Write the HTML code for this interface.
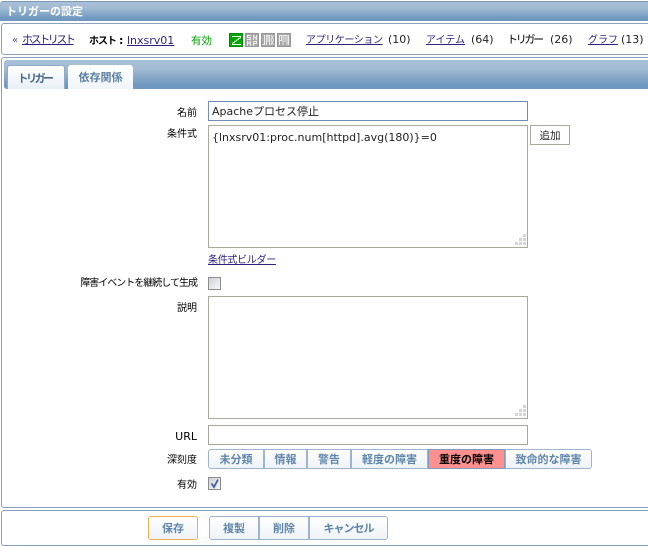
<!DOCTYPE html>
<html lang="ja"><head><meta charset="utf-8"><title>トリガーの設定</title>
<style>
html,body{margin:0;padding:0;background:#fff}
body{width:648px;height:547px;position:relative;overflow:hidden;font:10px "DejaVu Sans","WenQuanYi Zen Hei","Noto Sans CJK JP",sans-serif;color:#000}
.a{position:absolute;white-space:nowrap;line-height:14px}
.n{font-size:11px;color:#222}
a{color:#2f1f7f;text-decoration:underline}
.hb{position:absolute;background:linear-gradient(#a8c0d8,#a2bbd3 30%,#7099c1 85%,#6f98c0)}
.box{position:absolute;left:1px;width:660px;border:1px solid #8aa0bb;border-radius:3px;box-sizing:border-box;background:#fff}
.lab{position:absolute;right:451px;white-space:nowrap;line-height:14px;text-align:right}
.in{position:absolute;box-sizing:border-box;background:#fff;border:1px solid #aaa89a}
.grip{position:absolute;right:0;bottom:0;display:block}
.tab{position:absolute;top:65px;height:24px;box-sizing:border-box;border-radius:3px 3px 0 0;text-align:center;font-weight:bold;font-size:11px;line-height:26px;color:#5b7fa3;background:linear-gradient(#fff,#f0f5f9)}
.btn{position:absolute;box-sizing:border-box;text-align:center;font-weight:bold;font-size:11px;color:#5f86aa;background:linear-gradient(#fff,#eef3f7);border:1px solid #9db3cf;line-height:20px}
.ck{position:absolute;width:13px;height:13px;box-sizing:border-box;border:1px solid #8c8c8c;background:linear-gradient(135deg,#cfd2d8,#f7f7f9)}
.ic{position:absolute;top:33px;width:14px;height:14px;box-sizing:border-box;background:#a8a8a8;border:1px solid #969696}
.ic svg{display:block;shape-rendering:crispEdges}
.ic path{fill:none;stroke:#ececec;stroke-width:1}
</style></head><body>

<div class="hb" style="left:0;top:1px;width:660px;height:20px;border-top:1px solid #7f98b6;border-radius:3px 0 0 0;box-sizing:border-box"></div>
<div class="a" style="left:6px;top:5px;color:#fff;font-weight:bold;font-size:11px">トリガーの設定</div>

<div class="box" style="top:23px;height:32px"></div>
<div class="a" style="left:12px;top:34px;color:#4d4d80;font-size:10px">«</div>
<a class="a" style="left:22px;top:33px;font-size:11px;letter-spacing:-2.400px">ホストリスト</a>
<div class="a" style="left:89px;top:34px;font-weight:bold;letter-spacing:-1px">ホスト<span style="letter-spacing:0;margin-left:3px;font-size:11px">:</span></div>
<a class="a" style="left:127px;top:34px;font-size:11px">lnxsrv01</a>
<div class="a" style="left:191px;top:34px;color:#00a000;font-size:10.500px">有効</div>

<div class="ic" style="left:229px;background:#00a800;border-color:#008f00"><svg width="12" height="12"><path d="M2 2.500H10.500V3.500L2.500 9.500V10.500H11" style="stroke:#fff"/></svg></div>
<div class="ic" style="left:245px"><svg width="12" height="12"><path d="M5 1.500H1.500V3.500H4.500V5.500H1M7.500 6V1.500L10.500 5.500V1M1.500 12V7.500L3 9.500L4.500 7.500V12M7.500 12V7.500H10.500V9.500H7.500"/></svg></div>
<div class="ic" style="left:261px"><svg width="12" height="12"><path d="M2.500 1V10.500H.5M4.500 11V1.500H7.500V11M6 1.500V8M9 1L11.500 6L9 11M11.500 1L9 6L11.500 11"/></svg></div>
<div class="ic" style="left:277px"><svg width="12" height="12"><path d="M1.500 11V1.500H3.500V6.500H1.500M5 11V1.500H9V11M7 1.500V8M10.500 1V11"/></svg></div>

<a class="a" style="left:306px;top:34px;letter-spacing:-.4px">アプリケーション</a><div class="a n" style="left:388px;top:33px">(10)</div>
<a class="a" style="left:426px;top:34px">アイテム</a><div class="a n" style="left:471px;top:33px">(64)</div>
<div class="a" style="left:507px;top:33px;font-size:11px;letter-spacing:-2.300px">トリガー</div><div class="a n" style="left:550px;top:33px">(26)</div>
<a class="a" style="left:588px;top:34px">グラフ</a><div class="a n" style="left:621px;top:33px">(13)</div>

<div class="box" style="top:57px;height:451px"></div>
<div class="hb" style="left:4px;top:60px;width:660px;height:29px;border-radius:3px 0 0 3px"></div>
<div class="tab" style="left:7px;width:58px;color:#4a6a8a;border:1px solid #8fabc8;border-bottom:0;background:linear-gradient(#fff,#e9f0f6);letter-spacing:-2.500px;line-height:25px;padding-right:3px">トリガー</div>
<div class="tab" style="left:68px;width:65px">依存関係</div>

<div class="lab" style="top:107px">名前</div>
<div class="in" style="left:208px;top:101px;width:320px;height:20px;border-color:#6f8fb8;padding-left:3px;line-height:20px;font-size:11px;color:#222">Apacheプロセス停止</div>

<div class="lab" style="top:128px">条件式</div>
<div class="in" style="left:208px;top:125px;width:320px;height:123px;padding:4px 0 0 3px;line-height:15px;font-size:11px;color:#222">{lnxsrv01:proc.num[httpd].avg(180)}=0<svg class="grip" width="14" height="14"><path d="M10 1h3v3h-3zM6 5h3v3H6zM10 5h3v3h-3zM2 9h3v3H2zM6 9h3v3H6zM10 9h3v3h-3z" fill="#d4d4d4"/></svg></div>
<div class="in" style="left:530px;top:125px;width:40px;height:20px;text-align:center;line-height:21px;color:#222;font-size:10.500px">追加</div>
<a class="a" style="left:208px;top:254px;letter-spacing:-.3px">条件式ビルダー</a>

<div class="lab" style="top:277px;letter-spacing:-1px">障害イベントを継続して生成</div>
<div class="ck" style="left:208px;top:277px"></div>

<div class="lab" style="top:302px">説明</div>
<div class="in" style="left:208px;top:296px;width:320px;height:123px"><svg class="grip" width="14" height="14"><path d="M10 1h3v3h-3zM6 5h3v3H6zM10 5h3v3h-3zM2 9h3v3H2zM6 9h3v3H6zM10 9h3v3h-3z" fill="#d4d4d4"/></svg></div>

<div class="lab" style="top:430px;font-size:11px">URL</div>
<div class="in" style="left:208px;top:425px;width:320px;height:20px"></div>

<div class="lab" style="top:454px">深刻度</div>
<div class="btn" style="left:208px;top:449px;width:56px;height:20px;border-radius:3px 0 0 3px">未分類</div>
<div class="btn" style="left:264px;top:449px;width:43px;height:20px">情報</div>
<div class="btn" style="left:307px;top:449px;width:44px;height:20px">警告</div>
<div class="btn" style="left:351px;top:449px;width:77px;height:20px">軽度の障害</div>
<div class="btn" style="left:428px;top:449px;width:77px;height:20px;background:#ff9090;color:#000;border-color:#7f9cc0">重度の障害</div>
<div class="btn" style="left:505px;top:449px;width:87px;height:20px;border-radius:0 3px 3px 0">致命的な障害</div>

<div class="lab" style="top:479px">有効</div>
<div class="ck" style="left:208px;top:477px"><svg width="11" height="11" style="display:block"><path d="M2.500 5.500L5 9L9 1.500" fill="none" stroke="#45609f" stroke-width="1.800"/></svg></div>

<div class="box" style="top:510px;height:36px"></div>
<div class="btn" style="left:148px;top:516px;width:50px;height:24px;line-height:24px;border-color:#f0b050;border-radius:3px">保存</div>
<div class="btn" style="left:209px;top:516px;width:50px;height:24px;line-height:24px;border-radius:3px 0 0 3px">複製</div>
<div class="btn" style="left:259px;top:516px;width:50px;height:24px;line-height:24px">削除</div>
<div class="btn" style="left:309px;top:516px;width:79px;height:24px;line-height:24px;border-radius:0 3px 3px 0;letter-spacing:-1px">キャンセル</div>

</body></html>
